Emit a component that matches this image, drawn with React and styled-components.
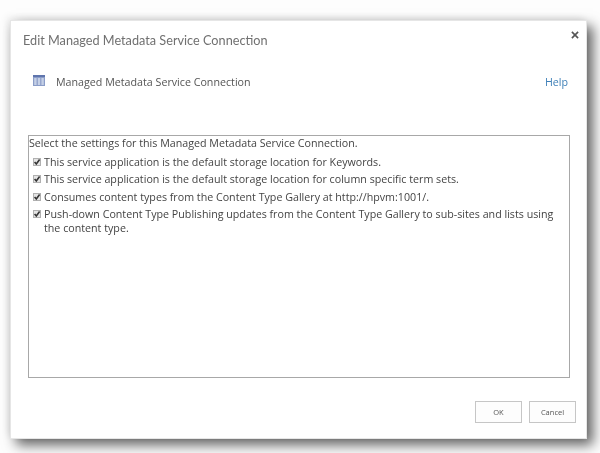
import React from 'react';
import styled, { createGlobalStyle } from 'styled-components';

const GlobalStyle = createGlobalStyle`
  html, body {
    margin: 0;
    padding: 0;
    background: #ffffff;
  }
  body {
    font-family: "Open Sans", "Liberation Sans", sans-serif;
    color: #444444;
    overflow: hidden;
  }
`;

const Page = styled.div`
  width: 600px;
  height: 453px;
  padding: 20px 13px 14px 10px;
  box-sizing: border-box;
  background: #fdfdfd;
`;

const Dialog = styled.div`
  height: 100%;
  box-sizing: border-box;
  background: #ffffff;
  border: 1px solid #e6e6e6;
  box-shadow: 6px 6px 12px rgba(0, 0, 0, 0.62), -3px -3px 8px rgba(0, 0, 0, 0.08);
  padding: 9px 6px 15px 17px;
  display: flex;
  flex-direction: column;
  filter: blur(0.5px);
`;

const TitleBar = styled.div`
  display: flex;
  justify-content: space-between;
  align-items: flex-start;
`;

const Title = styled.h1`
  margin: 0 0 0 -5px;
  font-family: "Lato", "Open Sans", sans-serif;
  font-size: 12.7px;
  font-weight: 400;
  line-height: 20px;
  color: #707070;
`;

const CloseButton = styled.button`
  border: 0;
  background: none;
  padding: 0;
  width: 9px;
  height: 10px;
  margin-top: 1px;
  color: #555555;
  display: flex;
`;

const SubHeader = styled.div`
  display: flex;
  align-items: center;
  justify-content: space-between;
  margin: 23px 12px 0 5px;
  height: 18px;
`;

const SubTitle = styled.div`
  display: flex;
  align-items: center;
  gap: 11px;
  font-size: 10.7px;
  color: #555555;

  svg {
    margin-top: -3px;
  }
`;

const HelpLink = styled.a`
  font-size: 10.7px;
  color: #3f80b8;
  text-decoration: none;
`;

const SettingsBox = styled.div`
  box-sizing: border-box;
  height: 243px;
  margin: 44px 10px 0 0;
  border: 1px solid #a8a8a8;
  padding: 0 8px 0 0;
  font-size: 10.7px;
  line-height: 14px;
  color: #444444;
`;

const Intro = styled.p`
  margin: 0 0 4.5px 0;
  line-height: 14px;
`;

const OptionList = styled.ul`
  list-style: none;
  margin: 0;
  padding: 0;
  display: flex;
  flex-direction: column;
  gap: 3.5px;
`;

const Option = styled.li`
  display: flex;
  align-items: flex-start;
  gap: 3px;
`;

const Check = styled.svg`
  flex: none;
  width: 8px;
  height: 8px;
  margin-top: 3px;
  margin-left: 4px;
`;

const Footer = styled.div`
  display: flex;
  justify-content: flex-end;
  gap: 7px;
  margin: 23px 4px 0 0;
`;

const ActionButton = styled.button`
  width: 47px;
  height: 22px;
  padding: 0;
  box-sizing: border-box;
  border: 1px solid #c6c6c6;
  background: #fdfdfd;
  font-family: inherit;
  font-size: 7.5px;
  color: #555555;
`;

const options = [
  'This service application is the default storage location for Keywords.',
  'This service application is the default storage location for column specific term sets.',
  'Consumes content types from the Content Type Gallery at http://hpvm:1001/.',
  'Push-down Content Type Publishing updates from the Content Type Gallery to sub-sites and lists using the content type.',
];

const CheckMark = () => (
  <Check viewBox="0 0 8 8">
    <rect x="0.5" y="0.5" width="7" height="7" fill="#e4e4e4" stroke="#b0b0b0" />
    <path d="M1.6 4 L3.3 6 L6.6 1.6" fill="none" stroke="#333333" strokeWidth="1.6" />
  </Check>
);

const ServiceIcon = () => (
  <svg width="12" height="11" viewBox="0 0 12 11">
    <rect x="0" y="0" width="12" height="11" fill="#8b9dc8" />
    <rect x="0" y="0" width="12" height="2" fill="#5f75ad" />
    <rect x="1.2" y="3" width="2.4" height="7" fill="#c5d0e6" />
    <rect x="4.8" y="3" width="2.4" height="7" fill="#c5d0e6" />
    <rect x="8.4" y="3" width="2.4" height="7" fill="#c5d0e6" />
  </svg>
);

const App = () => (
  <>
    <GlobalStyle />
    <Page>
      <Dialog>
        <TitleBar>
          <Title>Edit Managed Metadata Service Connection</Title>
          <CloseButton aria-label="Close">
            <svg width="8" height="8" viewBox="0 0 9 9">
              <path d="M1 1 L8 8 M8 1 L1 8" stroke="currentColor" strokeWidth="1.8" />
            </svg>
          </CloseButton>
        </TitleBar>
        <SubHeader>
          <SubTitle>
            <ServiceIcon />
            Managed Metadata Service Connection
          </SubTitle>
          <HelpLink href="#">Help</HelpLink>
        </SubHeader>
        <SettingsBox>
          <Intro>Select the settings for this Managed Metadata Service Connection.</Intro>
          <OptionList>
            {options.map((text) => (
              <Option key={text}>
                <CheckMark />
                <span>{text}</span>
              </Option>
            ))}
          </OptionList>
        </SettingsBox>
        <Footer>
          <ActionButton>OK</ActionButton>
          <ActionButton>Cancel</ActionButton>
        </Footer>
      </Dialog>
    </Page>
  </>
);

export default App;
